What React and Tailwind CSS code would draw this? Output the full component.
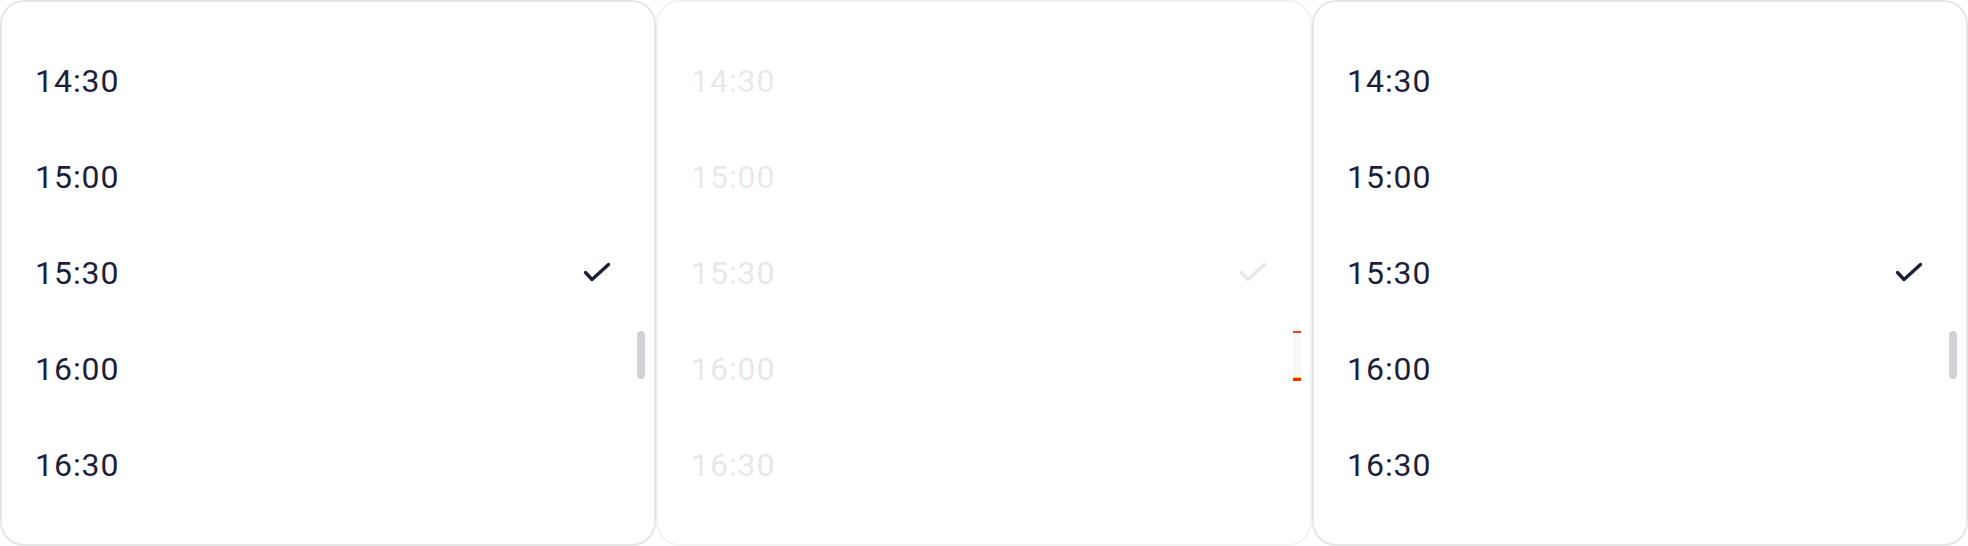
import React from "react";

const times = ["14:30", "15:00", "15:30", "16:00", "16:30"];

function CheckMark() {
  return (
    <svg width="28" height="22" viewBox="0 0 28 22" fill="none" className="text-[#1d1e3c]">
      <polyline
        points="2.5,10.5 9,17.5 25.5,2.5"
        stroke="currentColor"
        strokeWidth="3.4"
        strokeLinecap="round"
        strokeLinejoin="round"
      />
    </svg>
  );
}

function TimeList({ faded = false, glitchThumb = false }) {
  return (
    <div
      className={
        "relative h-[546px] flex-1 rounded-3xl border-2 bg-white overflow-hidden " +
        (faded ? "border-[#f2f2f2]" : "border-[#e6e6e6]")
      }
    >
      <div className={faded ? "opacity-10" : ""}>
        <ul className="flex flex-col pt-[31px]">
          {times.map((t) => (
            <li key={t} className="flex h-24 items-center justify-between pl-[33px] pr-[43px]">
              <span className="text-[32px] leading-none text-[#1d1e3c] tracking-[0.03em]">{t}</span>
              {t === "15:30" && <CheckMark />}
            </li>
          ))}
        </ul>
      </div>

      {/* scrollbar thumb */}
      {glitchThumb ? (
        <div className="absolute right-[9px] top-[329px] flex h-[50px] w-[8px] flex-col justify-between rounded-sm bg-[#f8f8f8]">
          <div className="h-[2px] w-full bg-[#ff3b1f]" />
          <div className="h-[4px] w-full bg-[#ff2a00] border-t border-yellow-300" />
        </div>
      ) : (
        <div className="absolute right-[9px] top-[329px] h-[48px] w-[8px] rounded-full bg-[#d1d1d6]" />
      )}
    </div>
  );
}

export default function App() {
  return (
    <div
      className="flex h-[546px] w-[1968px] bg-white"
      style={{ fontFamily: "Roboto, 'Noto Sans', sans-serif" }}
    >
      <TimeList />
      <TimeList faded glitchThumb />
      <TimeList />
    </div>
  );
}
